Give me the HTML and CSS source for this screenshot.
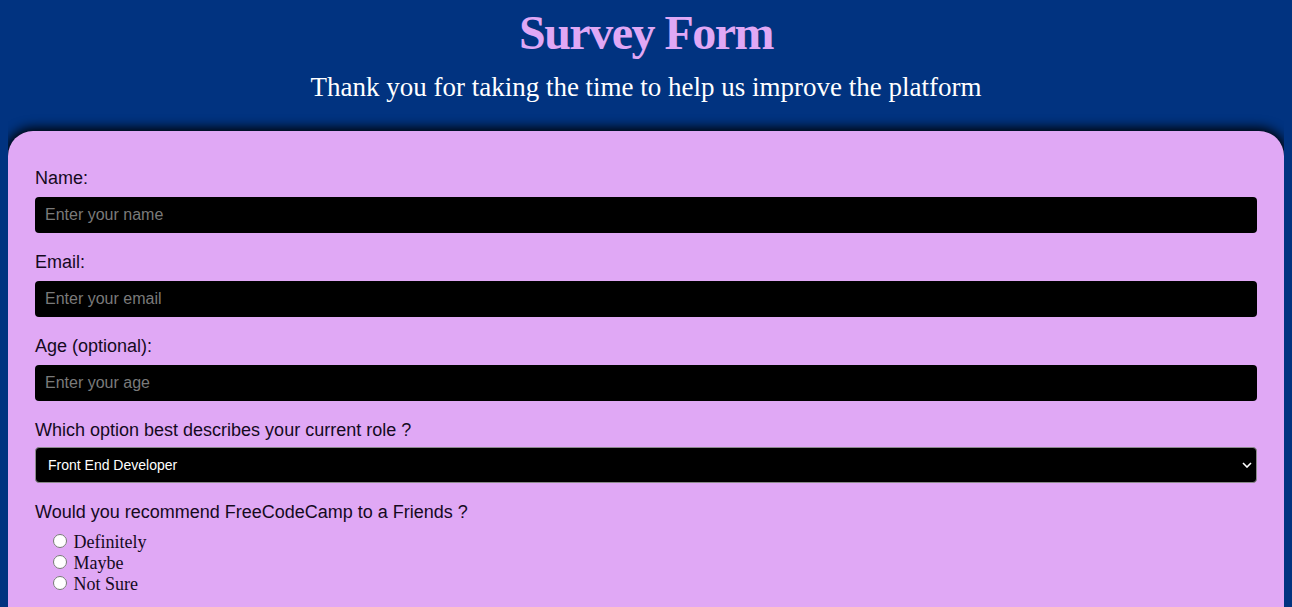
FILE: index.html
```html
<!DOCTYPE html>
<html lang="en">
<head>
<meta charset="utf-8">
<title>Survey Form</title>
<link rel="stylesheet" href="styles.css">
</head>
<body>
  <header class="header">
    <h1 class="title" id="title">Survey Form</h1>
    <p class="subtitle" id="description">Thank you for taking the time to help us improve the platform</p>
  </header>
  <form class="card" id="survey-form">
    <div class="group">
      <label class="label" for="name">Name:</label>
      <input class="field" id="name" type="text" placeholder="Enter your name">
    </div>
    <div class="group">
      <label class="label" for="email">Email:</label>
      <input class="field" id="email" type="email" placeholder="Enter your email">
    </div>
    <div class="group">
      <label class="label" for="age">Age (optional):</label>
      <input class="field" id="age" type="number" placeholder="Enter your age">
    </div>
    <div class="group">
      <label class="label label-tight" for="role">Which option best describes your current role ?</label>
      <div class="select-wrap">
        <select class="select" id="role">
          <option>Front End Developer</option>
          <option>Back End Developer</option>
          <option>Full Stack Developer</option>
          <option>Student</option>
          <option>Other</option>
        </select>
        <svg class="chevron" width="10" height="6" viewBox="0 0 10 6" aria-hidden="true"><path d="M1 1l4 4 4-4" fill="none" stroke="#fff" stroke-width="1.6"/></svg>
      </div>
    </div>
    <div class="group group-last">
      <p class="label">Would you recommend FreeCodeCamp to a Friends ?</p>
      <div class="radios">
        <label class="radio"><input type="radio" name="rec" value="definitely"> Definitely</label>
        <label class="radio"><input type="radio" name="rec" value="maybe"> Maybe</label>
        <label class="radio"><input type="radio" name="rec" value="notsure"> Not Sure</label>
      </div>
    </div>
  </form>
</body>
</html>
```

FILE: styles.css
```css
html {
  scrollbar-width: none;
}
html::-webkit-scrollbar {
  display: none;
}
body {
  margin: 0 8px 40px;
  background: #013380;
  font-family: "Liberation Serif", "Times New Roman", serif;
}
.header {
  padding-top: 6px;
  text-align: center;
}
.title {
  margin: 0;
  font-size: 48px;
  line-height: 53px;
  font-weight: bold;
  letter-spacing: -1.5px;
  color: #e0a8f5;
}
.subtitle {
  margin: 13px 0 0;
  font-size: 27px;
  line-height: 31px;
  color: #ffffff;
}
.card {
  margin-top: 28px;
  padding: 37px 27px 40px;
  background: #e0a8f5;
  border-radius: 25px;
  box-shadow: 0 0 12px 3px #000;
}
.group {
  margin-bottom: 19px;
}
.group-last {
  margin-bottom: 0;
}
.label {
  display: block;
  margin: 0 0 8px;
  font-family: "Liberation Sans", Arial, sans-serif;
  font-size: 18px;
  line-height: 21px;
  color: #150a1e;
}
.label-tight {
  margin-bottom: 6px;
}
.field {
  display: block;
  box-sizing: border-box;
  width: 100%;
  height: 36px;
  margin: 0;
  padding: 0 10px;
  border: none;
  border-radius: 4px;
  background: #000;
  color: #fff;
  font-family: "Liberation Sans", Arial, sans-serif;
  font-size: 16px;
}
.field::placeholder {
  color: #7a7a7a;
}
.select-wrap {
  position: relative;
}
.select {
  display: block;
  box-sizing: border-box;
  width: 100%;
  height: 36px;
  margin: 0;
  padding: 0 12px;
  border: 1px solid #8a8a8a;
  border-radius: 4px;
  background: #000;
  color: #fff;
  font-family: "Liberation Sans", Arial, sans-serif;
  font-size: 14px;
  appearance: none;
  -webkit-appearance: none;
}
.chevron {
  position: absolute;
  right: 5px;
  top: 15px;
}
.radios {
  padding-left: 13px;
}
.radio {
  display: block;
  height: 21px;
  font-size: 18px;
  line-height: 21px;
  color: #150a1e;
}
.radio input {
  width: 14px;
  height: 14px;
  margin: 3px 2px 0 5px;
}
```
